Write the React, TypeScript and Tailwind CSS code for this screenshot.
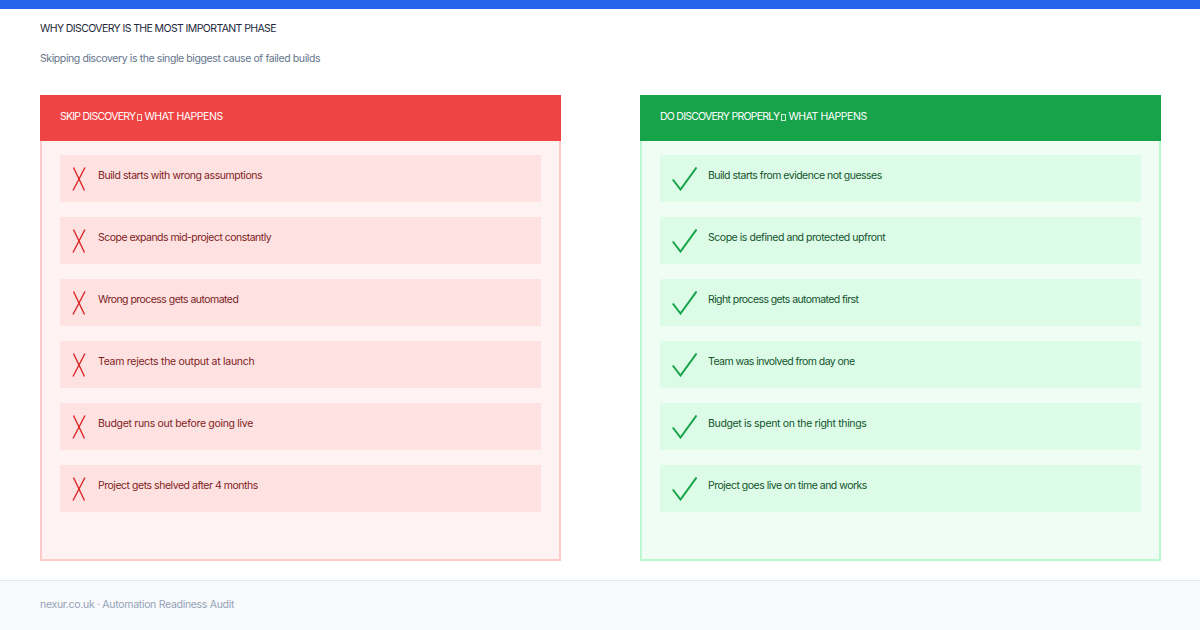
const skipItems = [
  { text: "Build starts with wrong assumptions", tracking: "tracking-[-0.43px]" },
  { text: "Scope expands mid-project constantly", tracking: "tracking-[-0.52px]" },
  { text: "Wrong process gets automated", tracking: "tracking-[-0.54px]" },
  { text: "Team rejects the output at launch", tracking: "tracking-[-0.28px]" },
  { text: "Budget runs out before going live", tracking: "tracking-[-0.31px]" },
  { text: "Project gets shelved after 4 months", tracking: "tracking-[-0.47px]" },
];

const doItems = [
  { text: "Build starts from evidence not guesses", tracking: "tracking-[-0.51px]" },
  { text: "Scope is defined and protected upfront", tracking: "tracking-[-0.46px]" },
  { text: "Right process gets automated first", tracking: "tracking-[-0.59px]" },
  { text: "Team was involved from day one", tracking: "tracking-[-0.56px]" },
  { text: "Budget is spent on the right things", tracking: "tracking-[-0.34px]" },
  { text: "Project goes live on time and works", tracking: "tracking-[-0.5px]" },
];

function CrossIcon() {
  return (
    <svg width="14" height="24" viewBox="0 0 14 24" fill="none" stroke="#dc2626" strokeWidth="1.4" className="shrink-0">
      <path d="M1.5 0.5 L12.5 23.5" />
      <path d="M13 0.5 L1 23.5" />
    </svg>
  );
}

function CheckIcon() {
  return (
    <svg width="25" height="24" viewBox="0 0 25 24" fill="none" stroke="#16a34a" strokeWidth="2" className="shrink-0 -mr-px">
      <path d="M0.8 12.5 L8.5 22.5 L24.5 0.5" />
    </svg>
  );
}

// the reference font has no dash glyph, so it shows a small tofu box
function Tofu() {
  return <span className="mx-0.5 inline-block h-[7px] w-[5px] border border-current opacity-80" />;
}

export default function App() {
  return (
    <div className="flex h-[630px] w-[1200px] flex-col overflow-hidden bg-white font-['Inter',sans-serif]">
      <div className="h-[9px] shrink-0 bg-[#2563eb]" />

      <div className="flex flex-1 flex-col px-10">
        <h1 className="mt-[13px] text-[10.5px] leading-[14px] font-normal tracking-[-0.6px] text-[#1e293b]">WHY DISCOVERY IS THE MOST IMPORTANT PHASE</h1>
        <p className="mt-4 text-[10.5px] leading-[14px] tracking-[-0.4px] text-[#64748b]">Skipping discovery is the single biggest cause of failed builds</p>

        <div className="mt-[29px] flex gap-[79px]">
          <div className="w-[521px] shrink-0">
            <div className="flex h-[46px] items-center bg-[#ef4444] px-5 pb-0.5 text-[10.5px] tracking-[-0.45px] text-white">
              <span className="tracking-[-0.75px]">SKIP DISCOVERY</span>
              <Tofu />
              WHAT HAPPENS
            </div>
            <div className="flex h-[420px] flex-col gap-[15px] border-2 border-t-0 border-[#fecaca] bg-[#fef2f2] px-[18px] pt-3.5">
              {skipItems.map((item) => (
                <div key={item.text} className="flex h-[47px] items-start gap-3 bg-[#fee2e2] pt-3 pl-3">
                  <CrossIcon />
                  <span className={`mt-px text-[10.5px] leading-[16px] text-[#7f1d1d] ${item.tracking}`}>{item.text}</span>
                </div>
              ))}
            </div>
          </div>

          <div className="w-[521px] shrink-0">
            <div className="flex h-[46px] items-center bg-[#16a34a] px-5 pb-0.5 text-[10.5px] tracking-[-0.45px] text-white">
              <span className="tracking-[-0.75px]">DO DISCOVERY PROPERLY</span>
              <Tofu />
              WHAT HAPPENS
            </div>
            <div className="flex h-[420px] flex-col gap-[15px] border-2 border-t-0 border-[#bbf7d0] bg-[#f0fdf4] px-[18px] pt-3.5">
              {doItems.map((item) => (
                <div key={item.text} className="flex h-[47px] items-start gap-3 bg-[#dcfce7] pt-3 pl-3">
                  <CheckIcon />
                  <span className={`mt-px text-[10.5px] leading-[16px] text-[#14532d] ${item.tracking}`}>{item.text}</span>
                </div>
              ))}
            </div>
          </div>
        </div>
      </div>

      <div className="flex h-[50px] shrink-0 items-center border-t border-[#e2e8f0] bg-[#f8fafc] px-10 pb-0.5 text-[10.5px] tracking-[-0.3px] text-[#94a3b8]">
        nexur.co.uk · Automation Readiness Audit
      </div>
    </div>
  );
}
